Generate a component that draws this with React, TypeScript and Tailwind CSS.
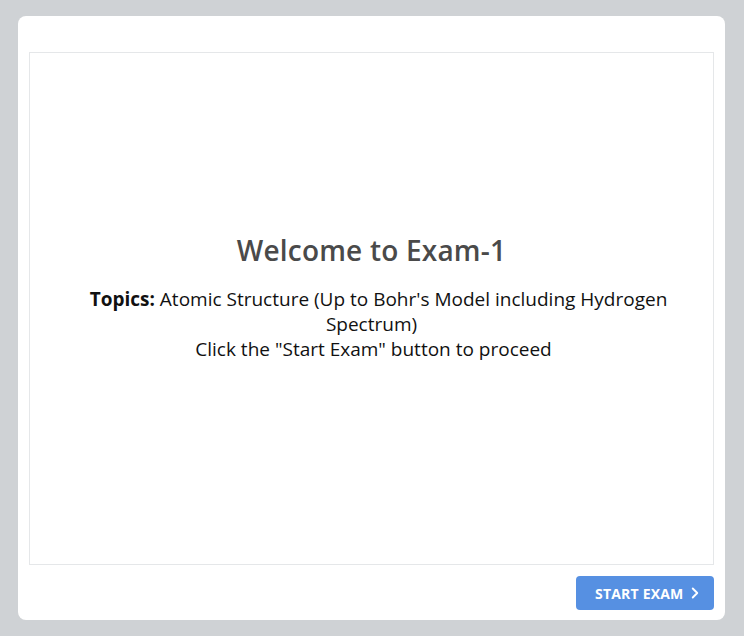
import { ChevronRight } from "lucide-react"

export default function App() {
  return (
    <div className="min-h-screen bg-[#cfd2d5] pl-[18px] pr-[19px] py-4" style={{ fontFamily: '"Open Sans", sans-serif' }}>
      <div className="bg-white rounded-lg h-[604px] flex flex-col px-[11px] pt-9 pb-[10px]">
        <div className="flex-1 border border-[#e5e7e9] flex flex-col items-center justify-center pb-[23px]">
          <h1 className="text-[28px] font-semibold text-[#4a4a4a] leading-tight mb-[19px] tracking-[0.2px]">Welcome to Exam-1</h1>
          <div className="w-[600px] text-center text-[19px] leading-[25px] text-[#111]">
            <p>
              <span className="pl-[14px]">
                <span className="font-bold">Topics:</span> Atomic Structure (Up to Bohr's Model including Hydrogen Spectrum)
              </span>
            </p>
            <p className="pl-[4px]">Click the "Start Exam" button to proceed</p>
          </div>
        </div>
        <div className="flex justify-end pt-[11px]">
          <button className="h-[34px] w-[138px] rounded bg-[#5690e2] text-white text-[14px] tracking-[0.2px] font-bold flex items-center justify-start gap-[2px] pl-[19px]">
            START EXAM
            <ChevronRight className="w-[18px] h-[18px]" strokeWidth={2.5} />
          </button>
        </div>
      </div>
    </div>
  )
}
